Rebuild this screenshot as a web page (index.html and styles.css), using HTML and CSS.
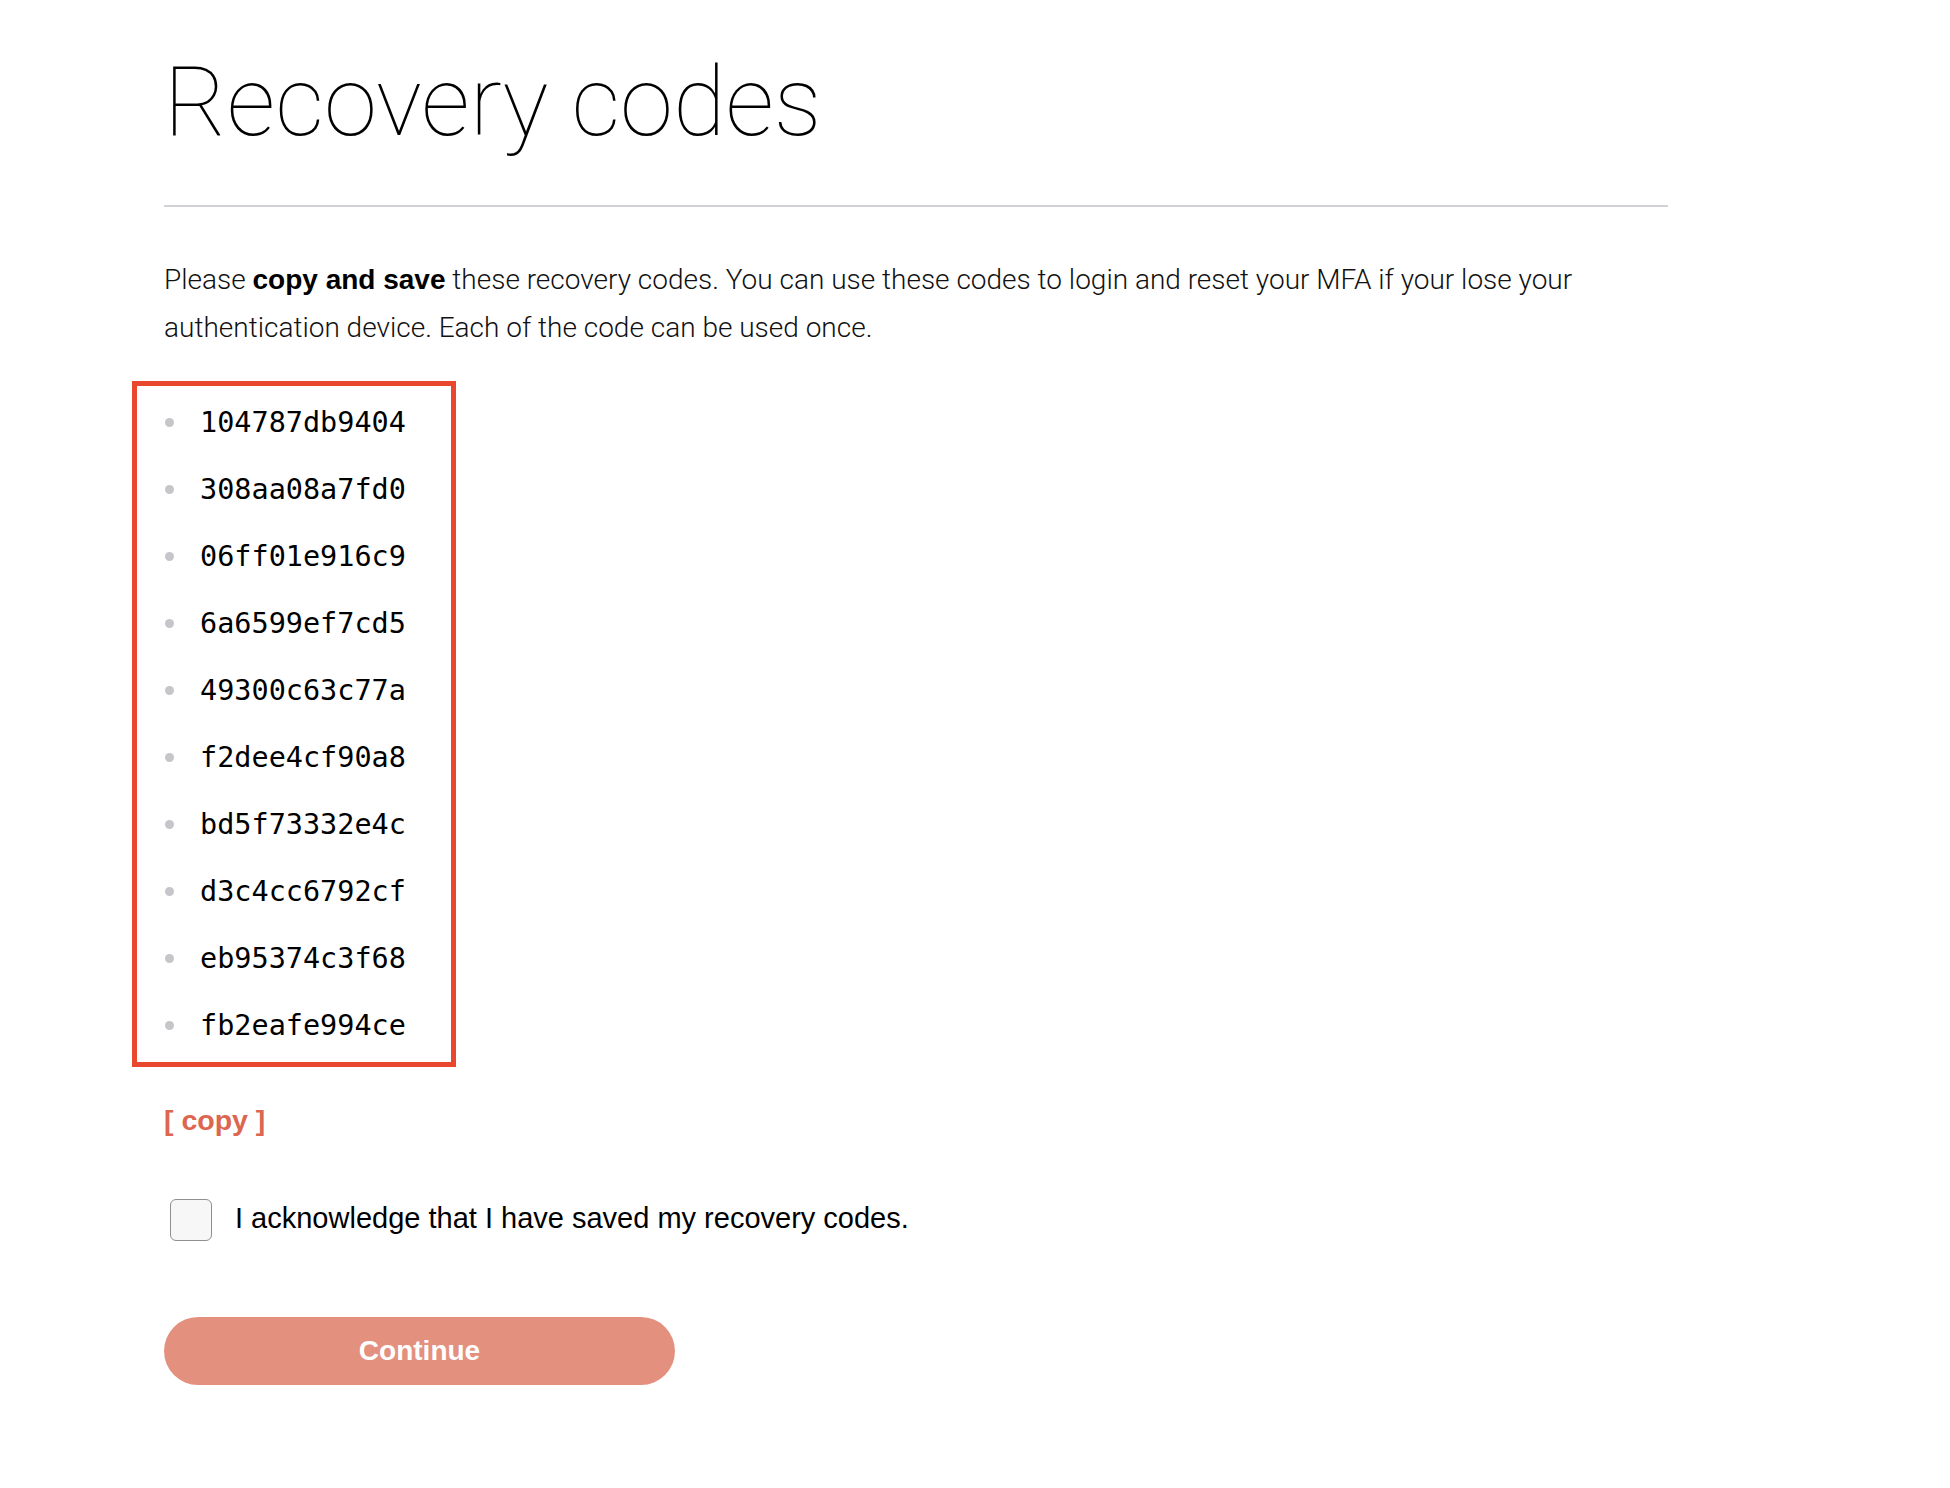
FILE: index.html
```html
<!DOCTYPE html>
<html lang="en">
<head>
<meta charset="utf-8">
<title>Recovery codes</title>
<link rel="stylesheet" href="styles.css">
</head>
<body>
<main class="page">
  <h1 class="title">Recovery codes</h1>
  <hr class="divider">
  <p class="intro">Please <strong>copy and save</strong> these recovery codes. You can use these codes to login and reset your MFA if your lose your authentication device. Each of the code can be used once.</p>
  <ul class="codes">
    <li class="code"><span class="dot"></span><span class="code-text">104787db9404</span></li>
    <li class="code"><span class="dot"></span><span class="code-text">308aa08a7fd0</span></li>
    <li class="code"><span class="dot"></span><span class="code-text">06ff01e916c9</span></li>
    <li class="code"><span class="dot"></span><span class="code-text">6a6599ef7cd5</span></li>
    <li class="code"><span class="dot"></span><span class="code-text">49300c63c77a</span></li>
    <li class="code"><span class="dot"></span><span class="code-text">f2dee4cf90a8</span></li>
    <li class="code"><span class="dot"></span><span class="code-text">bd5f73332e4c</span></li>
    <li class="code"><span class="dot"></span><span class="code-text">d3c4cc6792cf</span></li>
    <li class="code"><span class="dot"></span><span class="code-text">eb95374c3f68</span></li>
    <li class="code"><span class="dot"></span><span class="code-text">fb2eafe994ce</span></li>
  </ul>
  <a class="copy-link" href="#">[ copy ]</a>
  <label class="ack">
    <span class="checkbox"></span>
    <span class="ack-text">I acknowledge that I have saved my recovery codes.</span>
  </label>
  <button class="continue" type="button">Continue</button>
</main>
</body>
</html>
```

FILE: styles.css
```css
html, body {
  margin: 0;
  padding: 0;
  background: #ffffff;
}

.page {
  width: 1504px;
  padding: 54px 0 80px 164px;
  display: flex;
  flex-direction: column;
  align-items: flex-start;
  color: #111111;
}

.title {
  margin: 0;
  font-family: Roboto, "Liberation Sans", sans-serif;
  font-weight: 100;
  font-size: 96px;
  line-height: 96px;
  color: #000000;
  letter-spacing: 0;
}

.divider {
  align-self: stretch;
  margin: 55px 0 0 0;
  border: 0;
  height: 2px;
  background: #d2d2d6;
}

.intro {
  margin: 48.5px 0 0 0;
  font-family: Roboto, "Liberation Sans", sans-serif;
  font-weight: 300;
  font-size: 28px;
  line-height: 48.5px;
  color: #111111;
}

.intro strong {
  font-family: "Liberation Sans", Arial, sans-serif;
  font-weight: 700;
  color: #000000;
}

.codes {
  list-style: none;
  margin: 28.5px 0 0 -32px;
  padding: 3px 0;
  width: 314px;
  border: 5px solid #e9472e;
}

.code {
  height: 67px;
  display: flex;
  align-items: center;
  padding-left: 28px;
}

.dot {
  width: 9px;
  height: 9px;
  border-radius: 50%;
  background: #c5c5ca;
  margin-right: 26px;
  flex: none;
}

.code-text {
  font-family: "DejaVu Sans Mono", "Liberation Mono", monospace;
  font-size: 28.5px;
  color: #000000;
}

.copy-link {
  margin-top: 35.5px;
  font-family: "Liberation Sans", Arial, sans-serif;
  font-weight: 700;
  font-size: 28.5px;
  line-height: 34px;
  color: #dc6650;
  text-decoration: none;
}

.ack {
  margin-top: 62px;
  margin-left: 6px;
  display: flex;
  align-items: center;
  gap: 23px;
  height: 42px;
}

.checkbox {
  width: 40px;
  height: 40px;
  border: 1px solid #8f8f8f;
  border-radius: 6px;
  background: #f7f7f7;
  flex: none;
}

.ack-text {
  font-family: "Liberation Sans", Arial, sans-serif;
  font-size: 29px;
  line-height: 36px;
  padding-bottom: 4px;
  color: #000000;
}

.continue {
  margin-top: 76px;
  width: 511px;
  height: 68px;
  border: 0;
  border-radius: 34px;
  background: #e3907f;
  color: #ffffff;
  font-family: "Liberation Sans", Arial, sans-serif;
  font-weight: 700;
  font-size: 28px;
  padding: 0;
  cursor: pointer;
}
```
